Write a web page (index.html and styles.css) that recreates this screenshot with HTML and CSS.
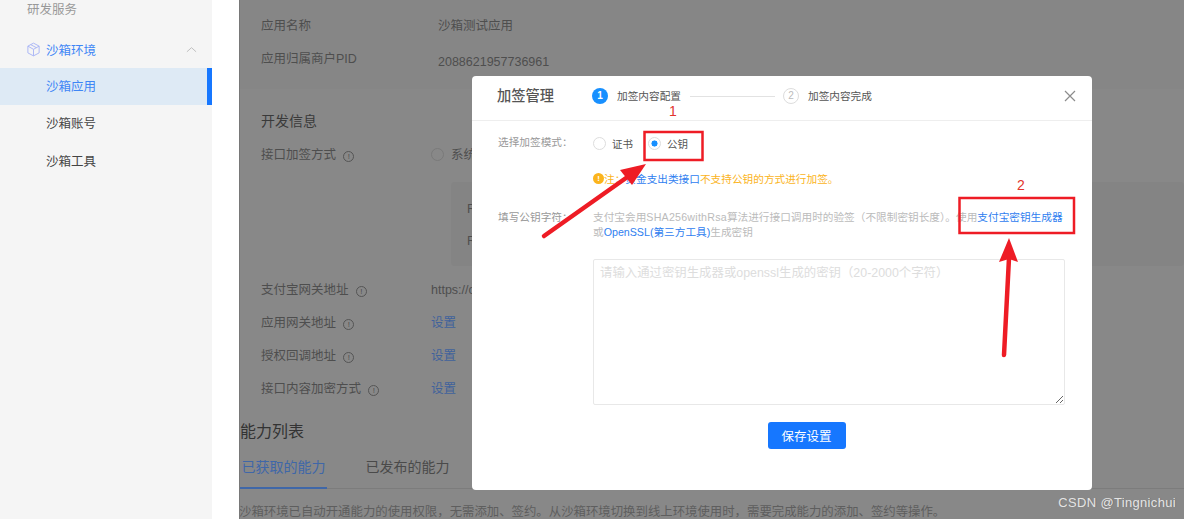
FILE: index.html
```html
<!DOCTYPE html>
<html lang="zh-CN">
<head>
<meta charset="utf-8">
<title>加签管理</title>
<link rel="stylesheet" href="styles.css">
</head>
<body>
<div class="page">
  <aside class="sidebar">
    <div class="nav-group">研发服务</div>
    <div class="nav-parent">
      <svg class="cube" viewBox="0 0 16 16" width="15" height="15" fill="none" stroke="#a9b4f5" stroke-width="1"><path d="M8 1.2 14 4.4V11.6L8 14.8 2 11.6V4.4Z"/><path d="M2 4.4 8 7.8 14 4.4M8 7.8V14.8M5 2.8 11 6"/></svg>
      <span class="nav-parent-text">沙箱环境</span>
      <svg class="chev" viewBox="0 0 12 7" width="11" height="7" fill="none" stroke="#bbb" stroke-width="1"><path d="M1 6 6 1.5 11 6"/></svg>
    </div>
    <div class="nav-item active">沙箱应用</div>
    <div class="nav-item">沙箱账号</div>
    <div class="nav-item">沙箱工具</div>
  </aside>
  <main class="main">
    <section class="info">
      <div class="info-row"><span>应用名称</span><span>沙箱测试应用</span></div>
      <div class="info-row second"><span>应用归属商户PID</span><span class="low">2088621957736961</span></div>
    </section>
    <section class="dev">
      <h2 class="dev-title">开发信息</h2>
      <div class="dev-row"><span class="label">接口加签方式 <i class="tip">!</i></span><span class="val"><i class="dim-radio"></i>系统默认密钥</span></div>
      <div class="key-box"><p>RSA2</p><p>RSA2</p></div>
      <div class="dev-row"><span class="label">支付宝网关地址 <i class="tip">!</i></span><span class="val">https://openapi.alipaydev.com/gateway.do</span></div>
      <div class="dev-row"><span class="label">应用网关地址 <i class="tip">!</i></span><a class="val dim-link">设置</a></div>
      <div class="dev-row"><span class="label">授权回调地址 <i class="tip">!</i></span><a class="val dim-link">设置</a></div>
      <div class="dev-row"><span class="label">接口内容加密方式 <i class="tip">!</i></span><a class="val dim-link">设置</a></div>
    </section>
    <section class="abilities">
      <h2 class="ab-title">能力列表</h2>
      <div class="tabs"><span class="tab on">已获取的能力</span><span class="tab">已发布的能力</span></div>
      <p class="ab-note">沙箱环境已自动开通能力的使用权限，无需添加、签约。从沙箱环境切换到线上环境使用时，需要完成能力的添加、签约等操作。</p>
    </section>
  </main>
</div>

<div class="modal">
  <header class="modal-head">
    <h1 class="modal-title">加签管理</h1>
    <div class="steps">
      <span class="dot dot-on">1</span><span class="step-text">加签内容配置</span>
      <span class="step-line"></span>
      <span class="dot dot-off">2</span><span class="step-text">加签内容完成</span>
    </div>
    <svg class="close" viewBox="0 0 12 12" width="12" height="12" fill="none" stroke="#8c8c8c" stroke-width="1.2"><path d="M1 1 11 11M11 1 1 11"/></svg>
  </header>
  <div class="modal-body">
    <div class="form-label mode-label">选择加签模式：</div>
    <div class="mode">
      <span class="radio"></span><span class="radio-text">证书</span>
      <span class="radio checked"></span><span class="radio-text">公钥</span>
    </div>
    <div></div>
    <div class="warn"><i class="warn-ico">!</i>注：<span class="link">资金支出类接口</span>不支持公钥的方式进行加签。</div>
    <div class="form-label key-label">填写公钥字符：</div>
    <div class="key-field">
      <p class="desc">支付宝会用<span class="latin">SHA256withRsa</span>算法进行接口调用时的验签（不限制密钥长度）。使用<span class="link">支付宝密钥生成器</span><br>或<span class="link">OpenSSL(第三方工具)</span>生成密钥</p>
      <textarea class="key-input" placeholder="请输入通过密钥生成器或openssl生成的密钥（20-2000个字符）"></textarea>
    </div>
  </div>
  <div class="modal-foot"><button class="save" type="button">保存设置</button></div>
</div>

<svg class="marks" viewBox="0 0 1184 519" width="1184" height="519">
  <rect x="644.5" y="132" width="58" height="28" fill="none" stroke="#ee1c25" stroke-width="2.5"/>
  <rect x="959.5" y="198" width="114.5" height="35" fill="none" stroke="#ee1c25" stroke-width="2.5"/>
  <path d="M544 236 626 178" stroke="#ee1c25" stroke-width="4.5" stroke-linecap="round" fill="none"/>
  <path d="M646 164 620 170 632 185Z" fill="#ee1c25"/>
  <path d="M1004 355 1009 258" stroke="#ee1c25" stroke-width="4.5" stroke-linecap="round" fill="none"/>
  <path d="M1009 238 999 262 1009 259 1018 262Z" fill="#ee1c25"/>
  <text x="669" y="116" class="mark-num">1</text>
  <text x="1017" y="190" class="mark-num">2</text>
</svg>
<div class="watermark">CSDN @Tingnichui</div>
</body>
</html>
```
FILE: styles.css
```css
* { box-sizing: border-box; }
html, body { margin: 0; height: 519px; overflow: hidden; background: #fff; }
body {
  font-family: "Liberation Sans", "Noto Sans CJK SC", sans-serif;
  font-size: 12.5px;
  color: #555;
}
.page { display: flex; height: 519px; gap: 27px; }

/* sidebar */
.sidebar { width: 212px; flex: none; background: #f5f5f5; color: #444; }
.nav-group { height: 20px; line-height: 18px; padding-left: 27px; padding-top: 1px; color: #999; }
.nav-parent {
  display: flex; align-items: center;
  height: 37px; margin-top: 11px; padding: 0 15px 1px 26px;
  color: #3f86f5;
}
.cube { flex: none; margin-right: 5px; }
.nav-parent-text { flex: 1; }
.nav-item { height: 37.4px; padding-top: 2px; line-height: 35.4px; padding-left: 46px; }
.nav-item.active { background: #deeaf5; color: #3f86f5; border-right: 5px solid #1677ff; }

/* dimmed page */
.main { flex: 1; min-width: 0; background: #888; border-left: 1px solid #787878; color: #4e4e4e; overflow: hidden; }
.info { height: 89px; padding: 15px 0 0 21px; background: #868686; }
.info-row { display: grid; grid-template-columns: 177px 1fr; height: 22px; line-height: 22px; }
.info-row.second { margin-top: 11px; height: 26px; }
.low { padding-top: 3px; }
.dev { padding: 22px 0 0 21px; }
.dev-title { margin: 0 0 8px; font-size: 14px; line-height: 20px; font-weight: 400; color: #3a3a3a; }
.dev-row { display: grid; grid-template-columns: 170px 1fr; height: 33px; line-height: 33px; white-space: nowrap; }
.label { color: #4e4e4e; }
.tip {
  display: inline-block; width: 11px; height: 11px; margin-left: 4px;
  border: 1px solid #555; border-radius: 50%;
  font: 8px/9px "Liberation Sans", sans-serif; text-align: center; vertical-align: 0;
}
.dim-radio {
  display: inline-block; width: 13px; height: 13px; margin-right: 7px;
  border: 1px solid #7a7a7a; border-radius: 50%; vertical-align: -2px;
}
.dim-link { color: #40629c; }
.key-box { margin: 10px 0 8px 190px; height: 84px; padding: 18px 16px 0; background: #848484; border-radius: 4px; }
.key-box p { margin: 0 0 13px; line-height: 19px; }
.abilities { margin-top: 15px; }
.ab-title { margin: 0; font-size: 16px; line-height: 22px; font-weight: 400; color: #333; }
.tabs { display: flex; gap: 37px; margin-top: 11px; height: 35px; border-bottom: 1px solid #7c7c7c; }
.tab { width: 87px; font-size: 14px; line-height: 26px; text-align: center; color: #4a4a4a; }
.tab.on { color: #3f67a8; border-bottom: 2px solid #3f67a8; height: 35px; }
.ab-note { margin: 14px 0 0 -1px; font-size: 12.4px; line-height: 18px; color: #5e5e5e; white-space: nowrap; }

/* modal */
.modal {
  position: absolute; left: 472px; top: 76px; width: 620px; height: 414px;
  display: flex; flex-direction: column;
  background: #fff; border-radius: 4px;
}
.modal-head { display: flex; align-items: center; height: 45px; padding: 0 16px 4px 25px; border-bottom: 1px solid #eee; }
.modal-title { margin: 0 38px 0 0; font-size: 14.25px; font-weight: 500; color: #555; line-height: 20px; white-space: nowrap; }
.steps { flex: 1; display: flex; align-items: center; font-size: 10.67px; color: #555; }
.step-text { margin-bottom: 2px; }
.dot {
  width: 16px; height: 16px; flex: none; margin-right: 9px; border-radius: 50%;
  font: 700 10px/16px "Liberation Sans", sans-serif; text-align: center;
}
.dot-on { background: #1890ff; color: #fff; }
.dot-off { border: 1px solid #ddd; color: #bbb; line-height: 14px; font-weight: 400; }
.step-line { width: 85px; height: 1px; margin: 0 8px 0 9px; background: #e2e2e2; }
.close { flex: none; }
.modal-body {
  display: grid; grid-template-columns: 95px 1fr;
  padding: 0 27px 0 26px; font-size: 10.67px;
}
.form-label { color: #999; white-space: nowrap; }
.mode-label { padding-top: 14px; line-height: 15px; }
.mode { display: flex; align-items: center; height: 44px; color: #555; }
.radio { width: 13px; height: 13px; border: 1px solid #ddd; border-radius: 50%; flex: none; margin-right: 6px; }
.radio-text { margin-right: 15px; font-size: 10.5px; }
.radio.checked { border-color: #ddd; background: radial-gradient(circle, #1890ff 0 2.8px, #fff 3.3px); }
.warn { display: flex; align-items: center; height: 15px; margin-top: 6px; color: #fbb41c; white-space: nowrap; }
.warn-ico {
  width: 11px; height: 11px; border-radius: 50%; background: #fbb41c; color: #fff;
  font: 700 8px/11px "Liberation Sans", sans-serif; text-align: center;
}
.link { color: #2f80f0; }
.key-label { padding-top: 24px; line-height: 15px; }
.key-field { padding-top: 24px; }
.desc { margin: 0; line-height: 15px; color: #bbb; white-space: nowrap; }
.latin { letter-spacing: .23px; }
.key-input {
  display: block; width: 472px; height: 146px; margin-top: 19px; padding: 5px 6px;
  border: 1px solid #e8e8e8; border-radius: 2px; outline: none; background: #fff;
  font: 12.4px/17px "Liberation Sans", "Noto Sans CJK SC", sans-serif;
}
.key-input::placeholder { color: #ddd; }
.modal-foot { display: flex; justify-content: center; padding-top: 17px; padding-left: 49px; }
.save {
  width: 78px; height: 27px; border: 0; border-radius: 3px; background: #1677ff; color: #fff;
  font: 12.5px "Liberation Sans", "Noto Sans CJK SC", sans-serif;
}

/* screenshot annotations */
.marks { position: absolute; left: 0; top: 0; pointer-events: none; }
.mark-num { font: 14px "Liberation Sans", sans-serif; fill: #e2342c; }
.watermark {
  position: absolute; right: 8px; bottom: 8px;
  font-size: 13px; line-height: 16px; letter-spacing: .33px; color: #e4e4e4;
  text-shadow: 1px 0 0 #777;
}
```
